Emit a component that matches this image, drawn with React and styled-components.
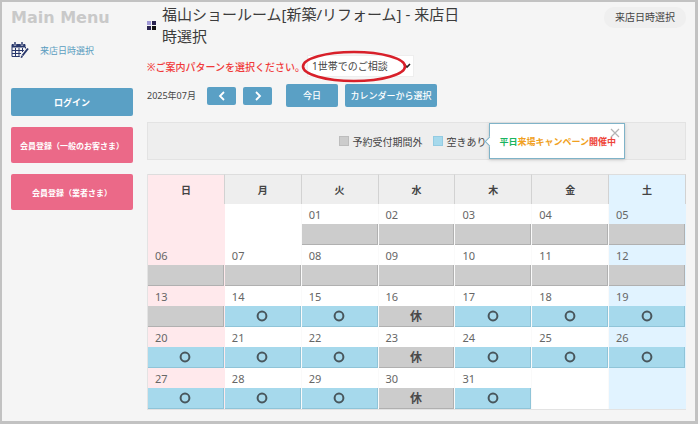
import React from "react";
import styled, { createGlobalStyle } from "styled-components";

const GlobalStyle = createGlobalStyle`
  * { box-sizing: border-box; }
  body {
    margin: 0;
    background: #fafafa;
    color: #444;
    font-family: "Noto Sans", "Noto Sans CJK JP", sans-serif;
    font-size: 10px;
  }
  button, select { font-family: inherit; }
`;

const Frame = styled.div`
  display: grid;
  grid-template-columns: 145px minmax(0, 1fr);
  margin: 0 2px 1px 0;
  border: 3px solid #c2c2c2;
  border-width: 2px 3px 3px 2px;
  background: #f5f5f5;
`;

const Sidebar = styled.nav`
  display: flex;
  flex-direction: column;
  padding: 4px 14px 0 9px;
`;

const MenuTitle = styled.h2`
  margin: 0;
  color: #c9c9c9;
  font: bold 16px/24px "DejaVu Sans", sans-serif;
  white-space: nowrap;
`;

const MenuLink = styled.a`
  display: flex;
  align-items: center;
  gap: 11px;
  height: 18px;
  margin: 11px 0 29px;
  color: #5b9dc0;
  font-size: 9px;
  text-decoration: none;
`;

const MenuButton = styled.button`
  height: ${(p) => (p.$member ? 36 : 28)}px;
  margin-bottom: 11px;
  padding: 0;
  border: 0;
  border-radius: 2px;
  background: ${(p) => (p.$member ? "#eb6988" : "#5aa0c5")};
  color: #fff;
  font-size: ${(p) => (p.$member ? 8 : 9)}px;
  font-weight: bold;
  white-space: nowrap;
`;

const Main = styled.main`
  padding: 1px 9px 11px 0;
`;

const Header = styled.header`
  display: flex;
  align-items: flex-start;
  justify-content: space-between;
`;

const TitleGroup = styled.div`
  display: flex;
  align-items: center;
  gap: 6px;
`;

const Title = styled.h1`
  max-width: 304px;
  margin: 0;
  color: #3c3c3c;
  font-size: 15px;
  font-weight: normal;
  line-height: 22px;
`;

const Crumb = styled.span`
  margin-top: 4px;
  padding: 0 11px;
  border-radius: 10px;
  background: #efefef;
  line-height: 21px;
  white-space: nowrap;
`;

const PatternRow = styled.div`
  display: flex;
  align-items: center;
  margin-top: 8px;
`;

const PatternLabel = styled.label`
  width: 160px;
  color: #f03a3a;
  font-weight: 500;
  white-space: nowrap;
`;

const SelectWrap = styled.div`
  position: relative;
  display: flex;
  align-items: center;
`;

const PatternSelect = styled.select`
  appearance: none;
  width: 107px;
  height: 22px;
  padding: 0 12px 0 4px;
  border: 1px solid #eee;
  border-radius: 0;
  background: #fff;
  color: #444;
  font-size: 10px;
`;

const SelectArrow = styled.svg`
  position: absolute;
  right: 3px;
  pointer-events: none;
`;

const Highlight = styled.svg`
  position: absolute;
  top: -5px;
  left: -6px;
  pointer-events: none;
`;

const MonthRow = styled.div`
  display: flex;
  align-items: center;
  height: 23px;
  margin-top: 7px;
  font-size: 9px;
`;

const Month = styled.span`
  width: 60px;
`;

const NavButton = styled.button`
  display: flex;
  align-items: center;
  justify-content: center;
  width: ${(p) => p.$width}px;
  height: ${(p) => (p.$arrow ? 18 : 23)}px;
  margin-right: ${(p) => p.$gap}px;
  padding: 0;
  border: 0;
  border-radius: 2px;
  background: #5aa0c5;
  color: #fff;
  font-size: 9px;
  font-weight: 500;
  white-space: nowrap;
`;

const Legend = styled.div`
  display: flex;
  align-items: center;
  justify-content: center;
  gap: 10px;
  height: 38px;
  margin-top: 15px;
  padding-right: 8px;
  border: 1px solid #e3e3e3;
  background: #eee;
`;

const LegendItem = styled.span`
  position: relative;
  display: flex;
  align-items: center;
  gap: 4px;
`;

const Swatch = styled.i`
  width: 10px;
  height: 10px;
  border: 1px solid ${(p) => (p.$open ? "#93cbe2" : "#bdbdbd")};
  background: ${(p) => (p.$open ? "#a6d9ec" : "#ccc")};
`;

const Tip = styled.div`
  position: absolute;
  top: 50%;
  left: 100%;
  display: flex;
  align-items: center;
  width: 136px;
  height: 36px;
  margin-left: 2px;
  padding-left: 10px;
  border: 1px solid #7fb3c8;
  background: #fff;
  box-shadow: 0 1px 3px #8886;
  font-size: 9px;
  white-space: nowrap;
  transform: translateY(-50%);

  &::before {
    content: "";
    position: absolute;
    left: -4px;
    width: 6px;
    height: 6px;
    border: 1px solid #7fb3c8;
    border-width: 0 0 1px 1px;
    background: #fff;
    transform: rotate(45deg);
  }
`;

const TipWord = styled.b`
  color: ${(p) => p.$color};
  font-weight: bold;
`;

const TipClose = styled.button`
  position: absolute;
  top: 4px;
  right: 4px;
  display: flex;
  padding: 0;
  border: 0;
  background: none;
`;

const Calendar = styled.table`
  width: 100%;
  margin-top: 14px;
  table-layout: fixed;
  border-spacing: 0;
  border-left: 1px solid #e3e3e3;
  border-bottom: 1px solid #e3e3e3;
`;

const dayColor = (col, base) => (col === 0 ? "#ffe9ec" : col === 6 ? "#e1f3ff" : base);

const DayHead = styled.th`
  height: 30px;
  padding: 0;
  border-top: 1px solid #ddd;
  border-right: 1px solid #d2d2d2;
  background: ${(p) => dayColor(p.$col, "#eee")};
  font-size: 10px;
`;

const Day = styled.td`
  height: 41px;
  padding: 0;
  border-right: 1px solid ${(p) => dayColor(p.$col, "#fafafa")};
  background: ${(p) => dayColor(p.$col, "#fff")};
  vertical-align: bottom;
`;

const DayNumber = styled.div`
  height: 20px;
  padding: 1px 0 0 7px;
  color: #666;
  font-size: 11px;
  line-height: 20px;
`;

const Slot = styled.button`
  display: flex;
  align-items: center;
  justify-content: center;
  width: 100%;
  height: 21px;
  padding: 0;
  border: 1px solid ${(p) => (p.$open ? "#8fc4d8" : "#b0b0b0")};
  border-width: 0 1px 1px 0;
  background: ${(p) => (p.$open ? "#a6d9ec" : "#ccc")};
  color: #4a4a4a;
  font: bold 12px/20px "Noto Sans CJK JP", sans-serif;
`;

const WEEKDAYS = ["日", "月", "火", "水", "木", "金", "土"];
const OFFSET = 2;
const WEEKS = [0, 1, 2, 3, 4].map((w) =>
  WEEKDAYS.map((_, c) => {
    const day = w * 7 + c - OFFSET + 1;
    return day > 0 && day <= 31 ? day : null;
  })
);

// Bookings open on the 14th; Wednesdays are closed.
const slotState = (day, col) => {
  if (day < 14) return "outside";
  return col === 3 ? "closed" : "open";
};

const OpenMark = () => (
  <svg width="12" height="12" viewBox="0 0 12 12" fill="none" stroke="#48565c" strokeWidth="2">
    <circle cx="6" cy="6" r="4.4" />
  </svg>
);

const Chevron = ({ d }) => (
  <svg width="8" height="10" viewBox="0 0 8 10" fill="none" stroke="#fff" strokeWidth="1.8">
    <path d={d} />
  </svg>
);

const CalendarIcon = () => (
  <svg width="18" height="17" viewBox="0 0 18 17" fill="none" stroke="#27366b">
    <path d="M1 2.5h13v2.5H1z" fill="#27366b" />
    <path d="M4 0v3.5M11 0v3.5" stroke="#f5f5f5" strokeWidth="2.4" />
    <path d="M4 0v3M11 0v3" strokeWidth="1.4" />
    <path d="M1 5v9.5h8M4.5 6v8.5M8 6v8.5M11.5 6v4M1 8.5h12M1 11.5h9M14.5 5v2" />
    <path d="M17 6.5l-7 9" stroke="#f5f5f5" strokeWidth="4" />
    <path d="M17 6.5l-5.5 7" strokeWidth="2" />
    <path d="M10.8 13.5l-.8 2 2-1" />
  </svg>
);

export default function App() {
  return (
    <>
      <GlobalStyle />
      <Frame>
        <Sidebar>
          <MenuTitle>Main Menu</MenuTitle>
          <MenuLink href="#reserve">
            <CalendarIcon />
            来店日時選択
          </MenuLink>
          <MenuButton>ログイン</MenuButton>
          <MenuButton $member>会員登録（一般のお客さま）</MenuButton>
          <MenuButton $member>会員登録（業者さま）</MenuButton>
        </Sidebar>
        <Main>
          <Header>
            <TitleGroup>
              <svg width="9" height="9" viewBox="0 0 9 9">
                <path d="M0 0h4v4H0z" fill="#9f98d6" />
                <path d="M5 0h4v4H5zM0 5h4v4H0z" fill="#2a2450" />
                <path d="M5 5h4v4H5z" fill="#111" />
              </svg>
              <Title>福山ショールーム[新築/リフォーム] - 来店日時選択</Title>
            </TitleGroup>
            <Crumb>来店日時選択</Crumb>
          </Header>
          <PatternRow>
            <PatternLabel htmlFor="pattern">※ご案内パターンを選択ください。</PatternLabel>
            <SelectWrap>
              <PatternSelect id="pattern">
                <option>1世帯でのご相談</option>
              </PatternSelect>
              <SelectArrow width="8" height="6" viewBox="0 0 8 6" fill="none" stroke="#222" strokeWidth="1.6">
                <path d="M1 1l3 3 3-3" />
              </SelectArrow>
              <Highlight width="106" height="33" viewBox="0 0 106 33" fill="none" stroke="#d8202a" strokeWidth="2.6">
                <ellipse cx="53" cy="16.5" rx="51" ry="14.5" />
              </Highlight>
            </SelectWrap>
          </PatternRow>
          <MonthRow>
            <Month>2025年07月</Month>
            <NavButton $arrow $width={29} $gap={7} aria-label="前の月">
              <Chevron d="M6 1L2 5l4 4" />
            </NavButton>
            <NavButton $arrow $width={29} $gap={14} aria-label="次の月">
              <Chevron d="M2 1l4 4-4 4" />
            </NavButton>
            <NavButton $width={52} $gap={7}>今日</NavButton>
            <NavButton $width={92} $gap={0}>カレンダーから選択</NavButton>
          </MonthRow>
          <Legend>
            <LegendItem>
              <Swatch />
              予約受付期間外
            </LegendItem>
            <LegendItem>
              <Swatch $open />
              空きあり
              <Tip>
                <TipWord $color="#19b560">平日</TipWord>
                <TipWord $color="#f0a020">来場キャンペーン</TipWord>
                <TipWord $color="#ee4438">開催中</TipWord>
                <TipClose aria-label="閉じる">
                  <svg width="10" height="10" viewBox="0 0 10 10" stroke="#b4b4b4" strokeWidth="1.2">
                    <path d="M1 1l8 8M9 1l-8 8" />
                  </svg>
                </TipClose>
              </Tip>
            </LegendItem>
          </Legend>
          <Calendar>
            <thead>
              <tr>
                {WEEKDAYS.map((name, col) => (
                  <DayHead key={name} $col={col}>{name}</DayHead>
                ))}
              </tr>
            </thead>
            <tbody>
              {WEEKS.map((week, row) => (
                <tr key={row}>
                  {week.map((day, col) => {
                    const state = slotState(day, col);
                    return (
                      <Day key={col} $col={col}>
                        {day && (
                          <>
                            <DayNumber>{String(day).padStart(2, "0")}</DayNumber>
                            <Slot $open={state === "open"} aria-label={`7月${day}日`}>
                              {state === "open" && <OpenMark />}
                              {state === "closed" && "休"}
                            </Slot>
                          </>
                        )}
                      </Day>
                    );
                  })}
                </tr>
              ))}
            </tbody>
          </Calendar>
        </Main>
      </Frame>
    </>
  );
}
